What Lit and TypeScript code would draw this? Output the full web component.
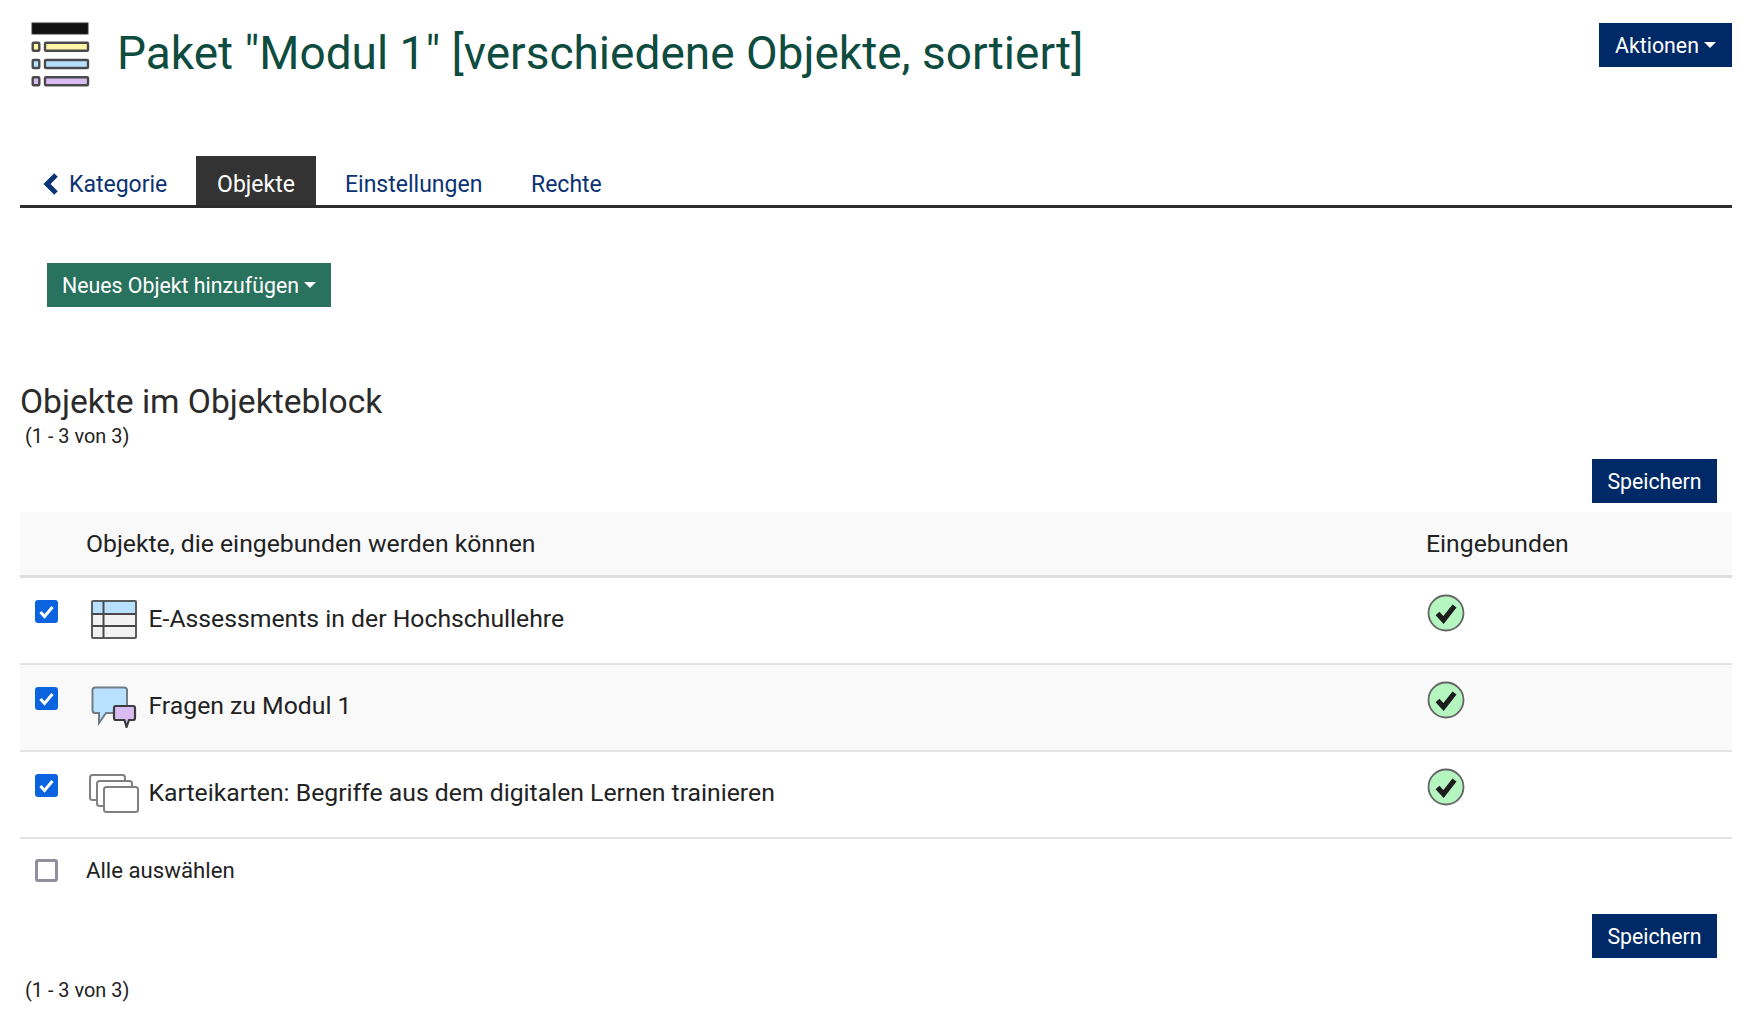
import { LitElement, html, css, svg } from "lit";
import { customElement } from "lit/decorators.js";

const caret = html`<span class="caret"></span>`;

const iconPackage = html`<svg width="60" height="66" viewBox="0 0 60 66">
  <rect x="1" y="1" width="56" height="11" fill="#111" stroke="#333" stroke-width="1"/>
  ${[["#fff6a8", 20.7], ["#b8e0ff", 38], ["#d9bdf2", 55.3]].map(
    ([c, y]) => svg`<rect x="1.700" y=${y} width="6.600" height="8" rx="1" fill=${c} stroke="#4a4a4a" stroke-width="2.400"/>
      <rect x="14" y=${y} width="43" height="8" rx="1" fill=${c} stroke="#4a4a4a" stroke-width="2.400"/>`
  )}
</svg>`;

const iconTable = html`<svg width="46" height="39" viewBox="0 0 46 39">
  <rect x="1" y="1" width="44" height="37" rx="1" fill="#f2f2f2" stroke="#5c5c5c" stroke-width="2"/>
  <rect x="2" y="2" width="42" height="12" fill="#b8e0ff"/>
  <path d="M1 14H45M1 26H45M12.500 1V38" fill="none" stroke="#484848" stroke-width="2"/>
</svg>`;

const iconChat = html`<svg width="46" height="42" viewBox="0 0 46 42">
  <path d="M4 1.500H33Q36 1.500 36 4V20H26Q23.500 20 23.500 23V27H15L8 37V27H4Q1.500 27 1.500 24V4Q1.500 1.500 4 1.500Z" fill="#b8e0ff" stroke="#717c86" stroke-width="2"/>
  <path d="M25 20H42Q44 20 44 22V32Q44 34 42 34H38L35.500 41L33.500 34H25Q23 34 23 32V22Q23 20 25 20Z" fill="#d9bdf2" stroke="#3c3c3c" stroke-width="2.200"/>
</svg>`;

const iconCards = html`<svg width="50" height="40" viewBox="0 0 50 40">
  <rect x="1" y="1" width="35" height="25" rx="2.500" fill="#fff" stroke="#808080" stroke-width="2"/>
  <rect x="8" y="7" width="35" height="25" rx="2.500" fill="#fff" stroke="#808080" stroke-width="2"/>
  <rect x="15" y="13" width="34" height="25" rx="2.500" fill="#fff" stroke="#808080" stroke-width="2"/>
</svg>`;

const iconCheck = html`<svg class="ok" width="38" height="38" viewBox="0 0 38 38">
  <circle cx="19" cy="19" r="17.500" fill="#b5f5c0" stroke="#666" stroke-width="1.800"/>
  <path d="M10.500 19.500L16.500 26L27.500 12" fill="none" stroke="#1c1c1c" stroke-width="5.200"/>
</svg>`;

const rows = [
  { icon: iconTable, label: "E-Assessments in der Hochschullehre" },
  { icon: iconChat, label: "Fragen zu Modul 1" },
  { icon: iconCards, label: "Karteikarten: Begriffe aus dem digitalen Lernen trainieren" },
];

@customElement("app-root")
export class AppRoot extends LitElement {
  static styles = css`
    :host {
      display: block;
      box-sizing: border-box;
      width: 1752px;
      height: 1033px;
      padding: 0 20px;
      background: #fff;
      color: #222;
      font-family: Roboto, "Liberation Sans", sans-serif;
      overflow: hidden;
    }
    .top {
      display: flex;
      align-items: flex-start;
      height: 156px;
    }
    .logo {
      margin: 22px 0 0 11px;
      height: 66px;
    }
    h1 {
      flex: 1;
      margin: 23px 0 0 26px;
      font-weight: 400;
      font-size: 46px;
      line-height: 60px;
      color: #0e4c3f;
    }
    .btn {
      display: flex;
      align-items: center;
      justify-content: center;
      box-sizing: border-box;
      height: 44px;
      color: #fff;
      background: #002a67;
      font-size: 21.300px;
    }
    .aktionen {
      width: 133px;
      margin-top: 23px;
    }
    .caret {
      display: inline-block;
      margin-left: 5px;
      border-left: 6px solid transparent;
      border-right: 6px solid transparent;
      border-top: 6px solid #fff;
    }
    .tabs {
      display: flex;
      height: 49px;
      border-bottom: 3px solid #2d2d2d;
      font-size: 23px;
      color: #0b3272;
    }
    .tab {
      display: flex;
      align-items: center;
      padding-top: 7px;
      box-sizing: border-box;
    }
    .tab.back {
      width: 176px;
      padding-left: 23px;
      gap: 10px;
    }
    .tab.active {
      width: 120px;
      justify-content: center;
      background: #333;
      color: #fff;
    }
    .tab.set {
      margin-left: 29px;
      width: 186px;
    }
    .green {
      width: 284px;
      margin: 55px 0 0 27px;
      background: #29725d;
    }
    h2 {
      margin: 74px 0 0;
      font-weight: 400;
      font-size: 33.600px;
      line-height: 42px;
      color: #2b2b2b;
    }
    .count {
      margin-left: 5px;
      font-size: 19.900px;
      line-height: 27px;
      color: #222;
    }
    .save-row {
      display: flex;
      justify-content: flex-end;
      padding-right: 15px;
    }
    .head-save {
      margin-top: 9px;
    }
    .save {
      width: 125px;
    }
    .grid {
      display: grid;
      margin-top: 9px;
      grid-template-columns: 66px 1fr 306px;
    }
    .row {
      display: grid;
      grid-column: 1 / -1;
      grid-template-columns: subgrid;
      border-bottom: 2px solid #e4e4e4;
      height: 87px;
      box-sizing: border-box;
      font-size: 24.750px;
    }
    .row.alt,
    .row.head {
      background: #f9f9f9;
    }
    .row.head {
      height: 66px;
      border-bottom: 3px solid #dedede;
      align-items: center;
    }
    .row.all {
      height: 62px;
      border: 0;
      align-items: center;
      font-size: 22.200px;
    }
    .box {
      display: block;
      box-sizing: border-box;
      width: 23px;
      height: 23px;
      margin-left: 15px;
      border-radius: 3px;
      background: #0b63e0;
    }
    .box.off {
      background: #fff;
      border: 3px solid #8f8f9d;
    }
    .box svg {
      display: block;
    }
    .cb {
      padding-top: 22px;
    }
    .obj {
      display: flex;
      align-items: center;
      height: 81px;
    }
    .ic {
      width: 62.500px;
      padding: 2px 6.500px 0 0;
      box-sizing: border-box;
      display: flex;
      justify-content: center;
      flex: none;
    }
    .ok {
      display: block;
      margin: 16px 0 0 1px;
    }
    .bottom {
      margin-top: 13px;
    }
    .count.end {
      margin-top: 19px;
    }
  `;

  private box(on: boolean) {
    return html`<span class="box ${on ? "" : "off"}">${on
      ? html`<svg width="23" height="23" viewBox="0 0 23 23"><path d="M5.500 12L9.500 16.500L17.500 7" fill="none" stroke="#fff" stroke-width="3"/></svg>`
      : ""}</span>`;
  }

  render() {
    return html`
      <div class="top">
        <div class="logo">${iconPackage}</div>
        <h1>Paket "Modul 1" [verschiedene Objekte, sortiert]</h1>
        <div class="btn aktionen">Aktionen${caret}</div>
      </div>
      <nav class="tabs">
        <div class="tab back">
          <svg width="16" height="22" viewBox="0 0 16 22"><path d="M13 2L4 11L13 20" fill="none" stroke="#0b3272" stroke-width="5"/></svg>
          Kategorie
        </div>
        <div class="tab active">Objekte</div>
        <div class="tab set">Einstellungen</div>
        <div class="tab">Rechte</div>
      </nav>
      <div class="btn green">Neues Objekt hinzufügen${caret}</div>
      <h2>Objekte im Objekteblock</h2>
      <div class="count">(1 - 3 von 3)</div>
      <div class="save-row head-save"><div class="btn save">Speichern</div></div>
      <div class="grid">
        <div class="row head">
          <div></div>
          <div>Objekte, die eingebunden werden können</div>
          <div>Eingebunden</div>
        </div>
        ${rows.map(
          (r, i) => html`<div class="row ${i === 1 ? "alt" : ""}">
            <div class="cb">${this.box(true)}</div>
            <div class="obj"><span class="ic">${r.icon}</span>${r.label}</div>
            <div>${iconCheck}</div>
          </div>`
        )}
        <div class="row all">
          <div>${this.box(false)}</div>
          <div>Alle auswählen</div>
          <div></div>
        </div>
      </div>
      <div class="save-row bottom"><div class="btn save">Speichern</div></div>
      <div class="count end">(1 - 3 von 3)</div>
    `;
  }
}
